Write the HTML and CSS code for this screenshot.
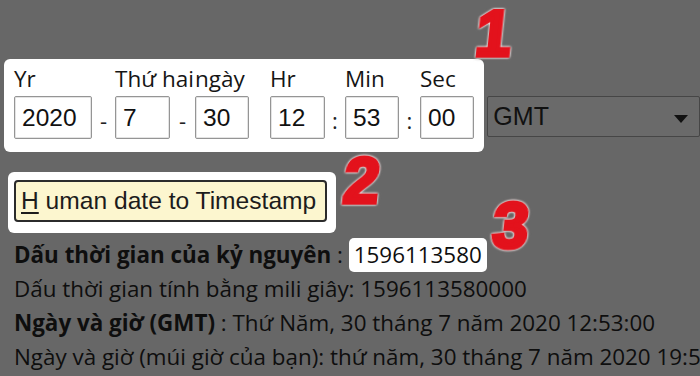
FILE: index.html
```html
<!DOCTYPE html>
<html lang="vi">
<head>
<meta charset="utf-8">
<title>Epoch converter</title>
<link rel="stylesheet" href="styles.css">
</head>
<body>
<div class="top">
  <div class="panel">
    <div class="field w78"><div class="lbl">Yr</div><input class="inp" value="2020"></div>
    <div class="sep w23">-</div>
    <div class="field w55"><div class="lbl">Thứ hai</div><input class="inp" value="7"></div>
    <div class="sep w25">-</div>
    <div class="field w54"><div class="lbl">ngày</div><input class="inp" value="30"></div>
    <div class="sep w21"></div>
    <div class="field w55"><div class="lbl">Hr</div><input class="inp" value="12"></div>
    <div class="sep w20">:</div>
    <div class="field w54"><div class="lbl">Min</div><input class="inp" value="53"></div>
    <div class="sep w21">:</div>
    <div class="field w54"><div class="lbl">Sec</div><input class="inp" value="00"></div>
  </div>
  <div class="select"><span>GMT</span><svg class="caret" width="14" height="8" viewBox="0 0 14 8"><path d="M0 0H14L7 8Z" fill="#111"/></svg></div>
</div>
<div class="btnwrap"><button class="btn"><u>H</u> uman date to Timestamp</button></div>
<div class="results">
  <div class="line"><b>Dấu thời gian của kỷ nguyên</b> : <span class="ts">1596113580</span></div>
  <div class="line">Dấu thời gian tính bằng mili giây: 1596113580000</div>
  <div class="line"><b>Ngày và giờ (GMT)</b> : Thứ Năm, 30 tháng 7 năm 2020 12:53:00</div>
  <div class="line">Ngày và giờ (múi giờ của bạn): thứ năm, 30 tháng 7 năm 2020 19:53:00</div>
</div>
<span class="mark m1">1</span>
<span class="mark m2">2</span>
<span class="mark m3">3</span>
</body>
</html>
```
FILE: styles.css
```css
html, body {
  margin: 0;
  padding: 0;
  background: #676767;
  width: 700px;
  height: 376px;
  overflow: hidden;
  font-family: "Open Sans", "Noto Sans", sans-serif;
  color: #0e0e0e;
}
.top {
  display: flex;
  align-items: flex-start;
  padding: 59px 0 0 4px;
}
.panel {
  display: flex;
  background: #fff;
  border-radius: 6px;
  width: 470px;
  height: 73px;
  padding: 7px 6px 13px 10px;
}
.field {
  display: flex;
  flex-direction: column;
  flex: none;
}
.lbl {
  height: 30px;
  line-height: 26px;
  font-size: 22.5px;
  white-space: nowrap;
  color: #151515;
}
.w78 { width: 78px; }
.w55 { width: 55px; }
.w54 { width: 54px; }
.w25 { width: 25px; }
.w23 { width: 23px; }
.w21 { width: 21px; }
.w20 { width: 20px; }
.inp {
  box-sizing: border-box;
  width: 100%;
  height: 43px;
  margin: 0;
  border: 1px solid #959595;
  border-radius: 2px;
  padding: 0 0 0 7px;
  font-family: "Liberation Sans", Arial, sans-serif;
  font-size: 24.5px;
  color: #111;
  background: #fff;
  box-shadow: inset 0 0 0 1px #e4e4e4;
  outline: none;
}
.sep {
  flex: none;
  align-self: flex-end;
  height: 43px;
  display: flex;
  align-items: center;
  justify-content: center;
  padding-top: 5px;
  box-sizing: border-box;
  font-size: 22px;
  color: #222;
}
.select {
  box-sizing: border-box;
  margin: 37px 0 0 3px;
  width: 215px;
  height: 41px;
  border: 1px solid #464646;
  border-radius: 2px;
  background: #6a6a6a;
  display: flex;
  align-items: center;
  justify-content: space-between;
  padding: 0 11px 0 5px;
  font-family: "Liberation Sans", Arial, sans-serif;
  font-size: 25px;
  color: #111;
}
.caret { margin-top: 4px; }
.btnwrap {
  display: inline-block;
  margin: 20px 0 0 8px;
  padding: 8px 9px 11px 6px;
  background: #fff;
  border-radius: 6px;
}
.btn {
  display: block;
  box-sizing: border-box;
  width: 313px;
  height: 42px;
  margin: 0;
  padding: 0 0 0 5px;
  text-align: left;
  border: 2px solid #2b2b2b;
  border-radius: 4px;
  background: #fcf6cf;
  font-family: "Liberation Sans", Arial, sans-serif;
  font-size: 24.6px;
  color: #1c1c1c;
  white-space: nowrap;
}
.btn u { text-underline-offset: 3px; text-decoration-thickness: 2px; }
.results {
  margin-top: 5px;
  padding-left: 14px;
  font-size: 22.4px;
}
.line {
  height: 34px;
  line-height: 34px;
  white-space: nowrap;
}
.line b { font-weight: 700; }
.ts {
  display: inline-block;
  background: #fff;
  border-radius: 5px;
  padding: 0 5px;
  height: 34px;
  line-height: 34px;
}
.mark {
  position: absolute;
  font-family: "Liberation Sans", Arial, sans-serif;
  font-weight: 700;
  font-size: 64px;
  line-height: 1;
  color: #e3121c;
  -webkit-text-stroke: 4px #e3121c;
  transform: skewX(-6deg);
  filter: drop-shadow(0 0 1px #fff) drop-shadow(0 0 1px #fde8e8) drop-shadow(0 0 1px rgba(0,0,0,0.4));
}
.m1 { left: 476px; top: 2px; }
.m2 { left: 344px; top: 149px; }
.m3 { left: 493px; top: 194px; }
```
